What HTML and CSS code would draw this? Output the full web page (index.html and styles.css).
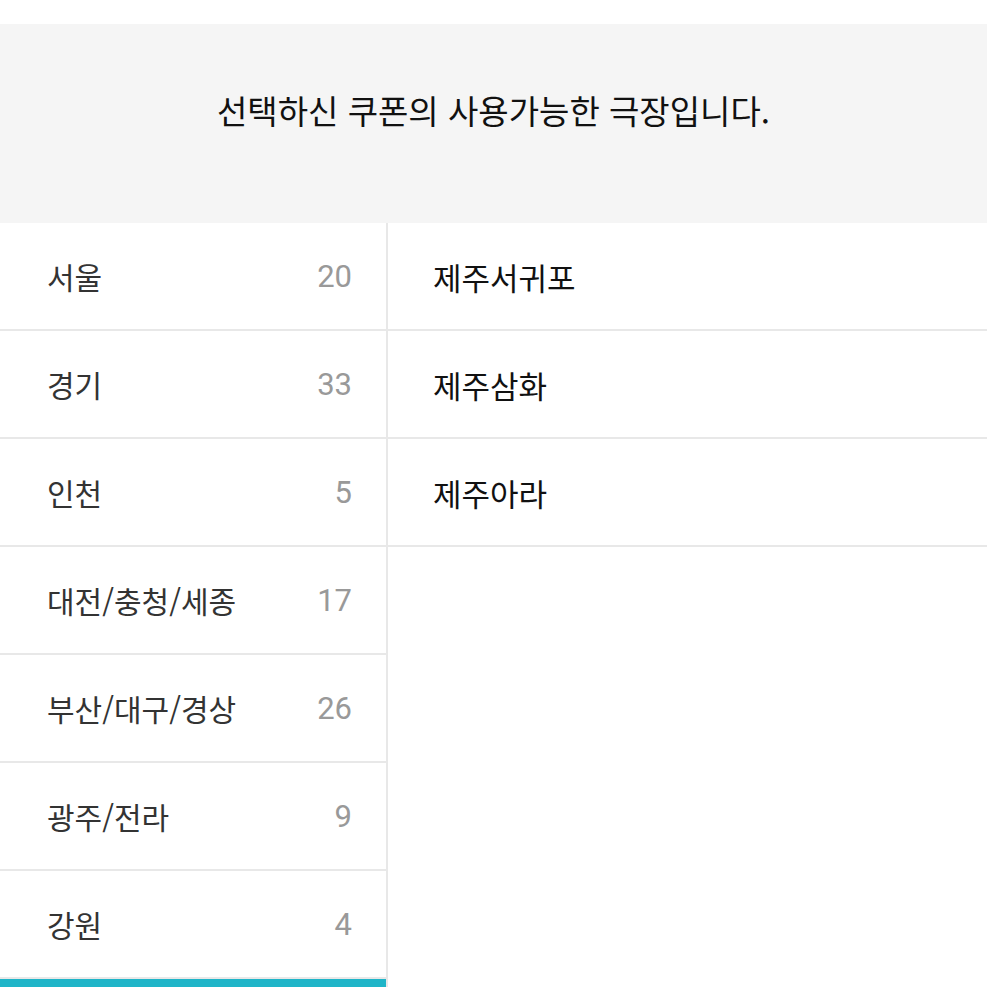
FILE: index.html
```html
<!DOCTYPE html>
<html lang="ko">
<head>
    <meta charset="UTF-8">
    <meta name="viewport" content="width=device-width, initial-scale=1.0">
    <title>사용가능 극장</title>
    <link rel="stylesheet" href="styles.css">
</head>
<body>
    <div class="banner">
        <p>선택하신 쿠폰의 사용가능한 극장입니다.</p>
    </div>
    <div class="picker">
        <ul class="regions">
            <li><span class="name">서울</span><span class="count">20</span></li>
            <li><span class="name">경기</span><span class="count">33</span></li>
            <li><span class="name">인천</span><span class="count">5</span></li>
            <li><span class="name">대전/충청/세종</span><span class="count">17</span></li>
            <li><span class="name">부산/대구/경상</span><span class="count">26</span></li>
            <li><span class="name">광주/전라</span><span class="count">9</span></li>
            <li><span class="name">강원</span><span class="count">4</span></li>
            <li class="active"></li>
        </ul>
        <ul class="theaters">
            <li>제주서귀포</li>
            <li>제주삼화</li>
            <li>제주아라</li>
        </ul>
    </div>
</body>
</html>
```

FILE: styles.css
```css
html {
    overflow: hidden;
}

body {
    margin: 0;
    padding-top: 24px;
    font-family: "Noto Sans CJK KR", "Noto Sans", sans-serif;
    background: #fff;
}

.banner {
    background: #f5f5f5;
    height: 199px;
    display: flex;
    align-items: center;
    justify-content: center;
}

.banner p {
    margin: 0 0 28px;
    font-size: 33px;
    color: #111;
}

.picker {
    display: flex;
}

ul {
    list-style: none;
    margin: 0;
    padding: 0;
}

.regions {
    width: 386px;
    border-right: 2px solid #e8e8e8;
}

.regions li {
    box-sizing: border-box;
    height: 108px;
    border-bottom: 2px solid #e8e8e8;
    display: flex;
    align-items: center;
    justify-content: space-between;
    padding: 0 34px 0 47px;
}

.regions .name {
    font-size: 30px;
    color: #333;
}

.regions .count {
    font-family: Roboto, sans-serif;
    font-size: 31px;
    color: #999;
}

.regions li.active {
    background: #1fb5c8;
    border-bottom-color: #1fb5c8;
}

.theaters {
    flex: 1;
}

.theaters li {
    box-sizing: border-box;
    height: 108px;
    border-bottom: 2px solid #e8e8e8;
    display: flex;
    align-items: center;
    padding-left: 45px;
    font-size: 31px;
    color: #111;
}
```
